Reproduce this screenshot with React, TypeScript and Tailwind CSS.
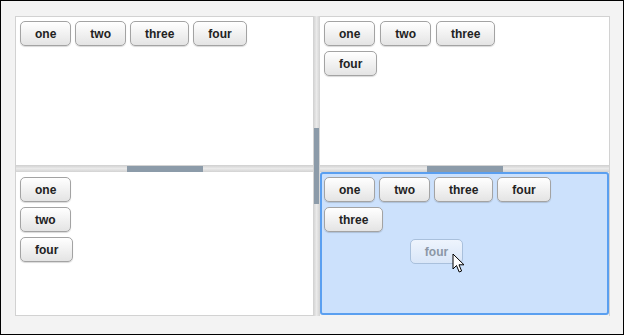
import React from "react";

const Btn = ({label}:{label:string})=>{
    return (
        <div className="h-[25px] px-[14px] flex items-center justify-center rounded-[5px] border border-[#a3a3a3] bg-gradient-to-b from-white to-[#e4e4e4] shadow-[0_1px_1px_rgba(0,0,0,0.15)] text-[12px] font-bold text-[#222] leading-none">
            {label}
        </div>
    )
}

const Row = ({labels, gap}:{labels:string[], gap:string})=>(
    <div className={"flex " + gap}>
        {labels.map((l,i)=><Btn key={i} label={l} />)}
    </div>
)

const HSplit = ()=>(
    <div className="h-[7px] shrink-0 flex justify-center bg-gradient-to-b from-[#cfcfcf] via-[#eaeaea] to-[#d2d2d2]">
        <div className="w-[76px] h-[6px] mt-[1px] bg-[#8c9ba9]"></div>
    </div>
)

const Cursor = ()=>(
    <svg width="14" height="21" viewBox="0 0 14 21" className="absolute left-[451px] top-[252px]">
        <path d="M1 1 L1 16 L4.5 12.5 L7.2 19 L9.6 18 L7 11.8 L12 11.8 Z" fill="#fff" stroke="#000" strokeWidth="1" strokeLinejoin="round" />
    </svg>
)

export default function App(){
    return (
        <div className="w-[624px] h-[335px] border border-black bg-[#f3f3f3] relative" style={{fontFamily:'"Liberation Sans", Arial, sans-serif'}}>
            <div className="ml-[14px] mt-[15px] w-[595px] h-[300px] flex">
                {/* left column */}
                <div className="w-[298px] flex flex-col border-l border-[#d2d2d2]">
                    <div className="h-[149px] bg-white border-t border-[#d2d2d2] px-[4px] pt-[4px]">
                        <Row labels={["one","two","three","four"]} gap="gap-[4px]" />
                    </div>
                    <HSplit />
                    <div className="flex-1 bg-white border-b border-[#d2d2d2] px-[4px] pt-[5px]">
                        <div className="flex flex-col items-start gap-[5px]">
                            <Btn label="one" />
                            <Btn label="two" />
                            <Btn label="four" />
                        </div>
                    </div>
                </div>
                {/* vertical splitter */}
                <div className="w-[7px] shrink-0 flex items-center bg-gradient-to-r from-[#cfcfcf] via-[#eaeaea] to-[#d2d2d2]">
                    <div className="w-[5px] h-[76px] ml-[1px] bg-[#8c9ba9]"></div>
                </div>
                {/* right column */}
                <div className="flex-1 flex flex-col border-r border-[#d2d2d2]">
                    <div className="h-[149px] bg-white border-t border-[#d2d2d2] px-[4px] pt-[4px] flex flex-col gap-[5px]">
                        <Row labels={["one","two","three"]} gap="gap-[5px]" />
                        <Row labels={["four"]} gap="gap-[5px]" />
                    </div>
                    <HSplit />
                    <div className="flex-1 bg-[#cce1fc] border-2 border-[#5a9ff0] rounded-[3px] px-[2px] pt-[3px] mb-[1px] flex flex-col gap-[5px]">
                        <Row labels={["one","two","three","four"]} gap="gap-[4px]" />
                        <Row labels={["three"]} gap="gap-[4px]" />
                    </div>
                </div>
            </div>
            {/* dragged ghost */}
            <div className="absolute left-[409px] top-[238px] w-[53px] h-[25px] flex items-center justify-center rounded-[5px] border border-[#a9c0dc] bg-gradient-to-b from-[#eef4fd] to-[#d9e6f8] text-[12px] font-bold text-[#8b97a6]">
                four
            </div>
            <Cursor />
        </div>
    )
}
